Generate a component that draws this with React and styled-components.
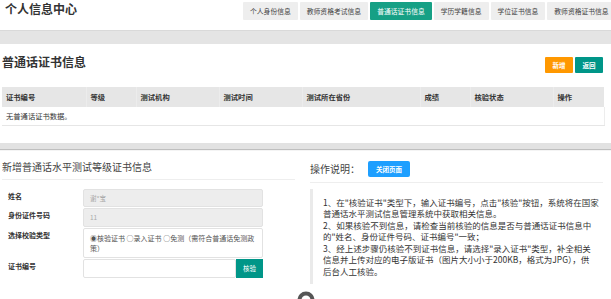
import React from 'react'
import styled, { createGlobalStyle } from 'styled-components'

const GlobalStyle = createGlobalStyle`
  html, body {
    margin: 0;
    padding: 0;
    background: #fff;
  }
  body {
    font-family: "Noto Sans CJK SC", "Noto Sans", sans-serif;
    color: #333;
    overflow: hidden;
  }
  * { box-sizing: border-box; }
`

const tabs = ['个人身份信息', '教师资格考试信息', '普通话证书信息', '学历学籍信息', '学位证书信息', '教师资格证书信息']
const columns = [
  { title: '证书编号', width: 84 },
  { title: '等级', width: 50 },
  { title: '测试机构', width: 83 },
  { title: '测试时间', width: 83 },
  { title: '测试所在省份', width: 118 },
  { title: '成绩', width: 50 },
  { title: '核验状态', width: 83 },
  { title: '操作', width: 51 },
]

const helpLines = [
  '1、在"核验证书"类型下，输入证书编号，点击"核验"按钮，系统将在国家',
  '普通话水平测试信息管理系统中获取相关信息。',
  '2、如果核验不到信息，请检查当前核验的信息是否与普通话证书信息中',
  '的"姓名、身份证件号码、证书编号"一致；',
  '3、经上述步骤仍核验不到证书信息，请选择"录入证书"类型，补全相关',
  '信息并上传对应的电子版证书（图片大小小于200KB，格式为JPG），供',
  '后台人工核验。',
]

const App = () => (
  <Page>
    <GlobalStyle />
    <Header>
      <Title>个人信息中心</Title>
      <Tabs>
        {tabs.map((t) => (
          <Tab key={t} active={t === '普通话证书信息'}>{t}</Tab>
        ))}
      </Tabs>
    </Header>
    <GrayBar />

    <Section>
      <SectionHead>
        <SectionTitle>普通话证书信息</SectionTitle>
        <Actions>
          <SmallButton color="#ff9800">新增</SmallButton>
          <SmallButton color="#009688">返回</SmallButton>
        </Actions>
      </SectionHead>
      <Table>
        <colgroup>
          {columns.map((c) => <col key={c.title} style={{ width: c.width }} />)}
        </colgroup>
        <thead>
          <tr>
            {columns.map((c) => <Th key={c.title}>{c.title}</Th>)}
          </tr>
        </thead>
        <tbody>
          <tr>
            <Td colSpan={columns.length}>无普通话证书数据。</Td>
          </tr>
        </tbody>
      </Table>
    </Section>

    <Separator />

    <Columns>
      <div>
        <PanelTitle>新增普通话水平测试等级证书信息</PanelTitle>
        <Form>
          <Label>姓名</Label>
          <Input h={18} readOnly>谢*宝</Input>
          <Label>身份证件号码</Label>
          <Input h={19} readOnly>11</Input>
          <Label>选择校验类型</Label>
          <RadioBox>◉核验证书 ○录入证书 ○免测（需符合普通话免测政策）</RadioBox>
          <Label>证书编号</Label>
          <InputGroup>
            <Input h={19} />
            <CheckButton>核验</CheckButton>
          </InputGroup>
        </Form>
      </div>
      <div>
        <HelpHead>
          <HelpTitle>操作说明：</HelpTitle>
          <BlueButton>关闭页面</BlueButton>
        </HelpHead>
        <Quote>
          {helpLines.map((l) => <QuoteLine key={l}>{l}</QuoteLine>)}
        </Quote>
      </div>
    </Columns>

    <FloatIcon>
      <svg width="18" height="18" viewBox="0 0 18 18">
        <circle cx="9" cy="9" r="6.5" fill="none" stroke="#555" strokeWidth="4" />
      </svg>
    </FloatIcon>
  </Page>
)

export default App

const Page = styled.div`
  position: relative;
  width: 611px;
  height: 299px;
  overflow: hidden;
`

const Header = styled.header`
  display: flex;
  align-items: flex-start;
  height: 22px;
  overflow: hidden;
`

const Title = styled.h1`
  flex: 0 0 243px;
  margin: 0;
  padding: 1px 0 0 5px;
  font-size: 12px;
  line-height: 16px;
  font-weight: 700;
  color: #333;
`

const Tabs = styled.nav`
  display: flex;
  gap: 2px;
  margin-top: 2px;
  flex-shrink: 0;
`

const Tab = styled.div`
  flex-shrink: 0;
  height: 18px;
  padding: 0 7px;
  font-size: 6.8px;
  line-height: 18px;
  white-space: nowrap;
  border-radius: 1px;
  color: ${(p) => (p.active ? '#fff' : '#444')};
  background: ${(p) => (p.active ? '#16a085' : '#eeeeee')};
`

const GrayBar = styled.div`
  margin-top: 8px;
  height: 14px;
  background: #e4e4e4;
  border-top: 1px solid #d9d9d9;
`

const Section = styled.section`
  padding: 0 7px 0 2px;
`

const SectionHead = styled.div`
  display: flex;
  justify-content: space-between;
  align-items: flex-start;
  margin-top: 10px;
`

const SectionTitle = styled.h2`
  margin: 0;
  font-size: 12px;
  line-height: 16px;
  font-weight: 600;
  color: #333;
`

const Actions = styled.div`
  display: flex;
  gap: 2px;
  margin-top: 3px;
  margin-right: 1px;
`

const SmallButton = styled.button`
  width: 28px;
  height: 16px;
  border: 0;
  border-radius: 1px;
  padding: 0;
  font-family: inherit;
  font-size: 6.5px;
  font-weight: 700;
  color: #fff;
  background: ${(p) => p.color};
`

const Table = styled.table`
  width: 602px;
  margin-top: 14px;
  border-collapse: collapse;
  table-layout: fixed;
`

const Th = styled.th`
  height: 20px;
  padding: 0 4px;
  text-align: left;
  font-size: 7.3px;
  font-weight: 700;
  color: #333;
  background: #e6e6e6;
  border-left: 1px solid #ececec;
  &:first-child { border-left: 0; }
`

const Td = styled.td`
  height: 18px;
  padding: 0 4px;
  font-size: 7.3px;
  color: #333;
  border-bottom: 1px solid #e6e6e6;
  border-right: 1px solid #ededed;
`

const Separator = styled.div`
  margin-top: 17px;
  height: 6px;
  background: #e2e2e2;
  box-shadow: 0 1px 1px rgba(0, 0, 0, 0.25);
`

const Columns = styled.div`
  display: grid;
  grid-template-columns: 293px 293px;
  gap: 15px;
  padding-left: 2px;
`

const PanelTitle = styled.h3`
  margin: 11px 0 0;
  padding-bottom: 5px;
  font-size: 10px;
  line-height: 14px;
  font-weight: 400;
  color: #444;
  border-bottom: 1px solid #eeeeee;
`

const Form = styled.div`
  display: grid;
  grid-template-columns: 81px 180px;
  row-gap: 1px;
  margin-top: 9px;
`

const Label = styled.div`
  padding: 1px 0 0 6px;
  font-size: 7px;
  line-height: 12px;
  font-weight: 700;
  color: #333;
`

const Input = styled.div`
  flex: 1;
  height: ${(p) => p.h}px;
  padding: 0 6px;
  font-size: 6.5px;
  line-height: ${(p) => p.h - 2}px;
  color: #aaa;
  border: 1px solid #e2e2e2;
  border-radius: 2px;
  background: ${(p) => (p.readOnly ? '#ededed' : '#fff')};
`

const RadioBox = styled.div`
  height: 30px;
  padding: 4px 6px;
  font-size: 7px;
  line-height: 10px;
  color: #555;
  border: 1px solid #e2e2e2;
  border-radius: 2px;
`

const InputGroup = styled.div`
  display: flex;
`

const CheckButton = styled.button`
  width: 27px;
  height: 19px;
  border: 0;
  padding: 0;
  font-family: inherit;
  font-size: 6.5px;
  color: #fff;
  background: #009688;
`

const HelpHead = styled.div`
  display: flex;
  align-items: center;
  gap: 8px;
  margin-top: 12px;
  padding-bottom: 5px;
  border-bottom: 1px solid #eeeeee;
`

const HelpTitle = styled.span`
  font-size: 10px;
  line-height: 16px;
  color: #444;
`

const BlueButton = styled.button`
  width: 42px;
  height: 16px;
  border: 0;
  border-radius: 2px;
  padding: 0;
  font-family: inherit;
  font-size: 6.5px;
  font-weight: 700;
  color: #fff;
  background: #1e9fff;
`

const Quote = styled.div`
  margin-top: 6px;
  padding: 8px 0 7px 10px;
  border-left: 3px solid #eaeaea;
`

const QuoteLine = styled.div`
  font-size: 8.5px;
  line-height: 11.5px;
  white-space: nowrap;
  color: #333;
`

const FloatIcon = styled.div`
  position: absolute;
  left: 297px;
  top: 290px;
  width: 18px;
  height: 18px;
`
